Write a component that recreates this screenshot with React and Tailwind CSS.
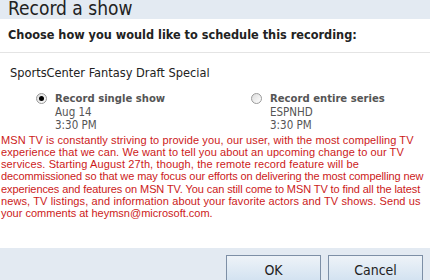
import React from 'react';

// each line keeps its own tracking so the line ends sit where the original's do
const notice = [
  ['MSN TV is constantly striving to provide you, our user, with the most compelling TV', 'tracking-[0.1px]'],
  ['experience that we can. We want to tell you about an upcoming change to our TV', 'tracking-[0.09px]'],
  ['services. Starting August 27th, though, the remote record feature will be', 'tracking-[0.12px]'],
  ['decommissioned so that we may focus our efforts on delivering the most compelling new', 'tracking-[-0.1px]'],
  ['experiences and features on MSN TV. You can still come to MSN TV to find all the latest', 'tracking-[-0.1px]'],
  ['news, TV listings, and information about your favorite actors and TV shows. Send us', 'tracking-[0.11px]'],
  ['your comments at heymsn@microsoft.com.', 'tracking-normal'],
];

function Radio({ checked }) {
  return (
    <span className="mt-[1px] flex h-[11px] w-[11px] shrink-0 items-center justify-center rounded-full border border-[#9a9a9a] bg-gradient-to-br from-[#dcdcdc] to-white">
      {checked && <span className="h-[5px] w-[5px] rounded-full bg-black" />}
    </span>
  );
}

function Choice({ checked, title, line1, line2, className }) {
  return (
    <div className={`flex gap-[8px] ${className}`}>
      <Radio checked={checked} />
      <div className="text-[#555] text-[11.5px] leading-[13.5px]">
        <div className="font-bold text-[11.2px]">{title}</div>
        <div>{line1}</div>
        <div>{line2}</div>
      </div>
    </div>
  );
}

export default function App() {
  return (
    <div className="w-[430px] h-[280px] overflow-hidden bg-white flex flex-col font-['DejaVu_Sans_Condensed','DejaVu_Sans',sans-serif] text-[#222]">
      {/* Title bar */}
      <div className="h-[19px] shrink-0 bg-[#e3eaf2] pl-[8px] text-[19px] leading-[17px]">Record a show</div>

      {/* Heading */}
      <div className="h-[34px] shrink-0 flex items-center pl-[8px] border-b border-[#e4e4e4]">
        <span className="font-bold text-[12.6px]">Choose how you would like to schedule this recording:</span>
      </div>

      {/* Content */}
      <div className="pl-[10px] pt-[13px] text-[12.7px] leading-[14px]">SportsCenter Fantasy Draft Special</div>

      <div className="flex pt-[12px] pl-[36px]">
        <Choice checked className="w-[215px]" title="Record single show" line1="Aug 14" line2="3:30 PM" />
        <Choice title="Record entire series" line1="ESPNHD" line2="3:30 PM" />
      </div>

      <div className="pl-[1px] pt-[1px] font-['Liberation_Sans',sans-serif] text-[11px] leading-[12.3px] text-[#cc1a1a]">
        {notice.map(([line, track]) => (
          <div key={line} className={`whitespace-nowrap ${track}`}>{line}</div>
        ))}
      </div>

      <div className="flex-1" />

      {/* Buttons */}
      <div className="h-[32px] shrink-0 bg-[#e3eaf2] flex justify-end gap-[7px] pr-[7px] pt-[7px]">
        <button className="w-[95px] h-[30px] shrink-0 border border-[#7d8fa6] bg-gradient-to-b from-[#eef3f8] to-[#cfe0f0] text-[14px] text-[#222] leading-[26px]">OK</button>
        <button className="w-[95px] h-[30px] shrink-0 border border-[#7d8fa6] bg-gradient-to-b from-[#eef3f8] to-[#cfe0f0] text-[14px] text-[#222] leading-[26px]">Cancel</button>
      </div>
    </div>
  );
}
